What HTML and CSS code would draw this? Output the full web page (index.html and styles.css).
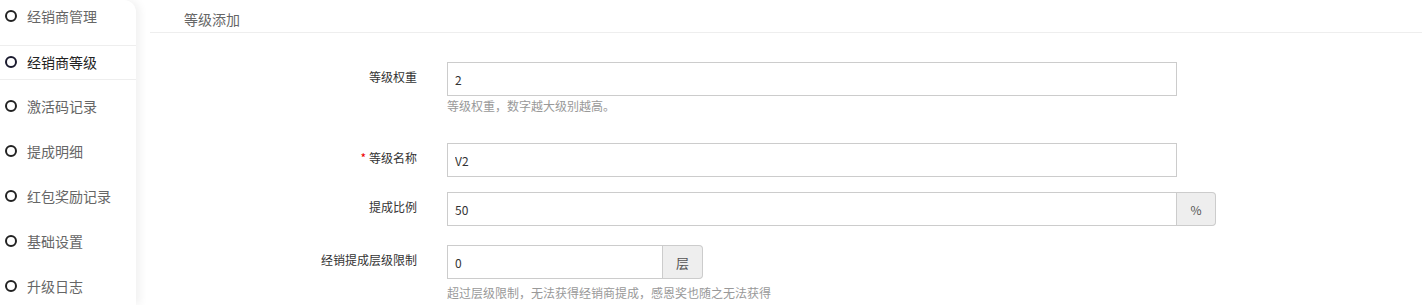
FILE: index.html
```html
<!DOCTYPE html>
<html lang="zh">
<head>
<meta charset="utf-8">
<link rel="stylesheet" href="styles.css">
</head>
<body>
<div class="page">
  <aside class="sidebar">
    <ul class="menu">
      <li class="menu-item"><span class="dot"></span>经销商管理</li>
      <li class="menu-item active"><span class="dot"></span>经销商等级</li>
      <li class="menu-item"><span class="dot"></span>激活码记录</li>
      <li class="menu-item"><span class="dot"></span>提成明细</li>
      <li class="menu-item"><span class="dot"></span>红包奖励记录</li>
      <li class="menu-item"><span class="dot"></span>基础设置</li>
      <li class="menu-item"><span class="dot"></span>升级日志</li>
    </ul>
  </aside>
  <main class="content">
    <div class="panel-head">等级添加</div>
    <form class="form">
      <div class="row row-1">
        <label class="label">等级权重</label>
        <div class="control">
          <input class="input" type="text" value="2">
          <div class="help help-1">等级权重，数字越大级别越高。</div>
        </div>
      </div>
      <div class="row row-2">
        <label class="label"><span class="req">*</span>等级名称</label>
        <div class="control">
          <input class="input" type="text" value="V2">
        </div>
      </div>
      <div class="row row-3">
        <label class="label">提成比例</label>
        <div class="control">
          <div class="group group-wide">
            <input class="input grp-input" type="text" value="50">
            <span class="addon">%</span>
          </div>
        </div>
      </div>
      <div class="row row-4">
        <label class="label">经销提成层级限制</label>
        <div class="control">
          <div class="group group-narrow">
            <input class="input grp-input" type="text" value="0">
            <span class="addon addon-layer">层</span>
          </div>
          <div class="help help-4">超过层级限制，无法获得经销商提成，感恩奖也随之无法获得</div>
        </div>
      </div>
    </form>
  </main>
</div>
</body>
</html>
```

FILE: styles.css
```css
* { box-sizing: border-box; }
html, body {
  margin: 0;
  padding: 0;
  background: #fff;
  font-family: "Noto Sans CJK SC", "Noto Sans", "Liberation Sans", sans-serif;
  color: #333;
}
.page {
  display: flex;
  height: 305px;
  overflow: hidden;
}
.sidebar {
  width: 136px;
  flex: 0 0 136px;
  background: #fff;
  border-top-right-radius: 12px;
  box-shadow: 4px 0 8px rgba(0, 0, 0, 0.06);
  position: relative;
  z-index: 1;
}
.menu {
  list-style: none;
  margin: 0;
  padding: 0;
}
.menu-item {
  display: flex;
  align-items: center;
  height: 45px;
  padding-left: 5px;
  padding-bottom: 12px;
  font-size: 14px;
  color: #666;
  white-space: nowrap;
}
.menu-item:first-child {
  height: 45px;
  padding-bottom: 13px;
}
.menu-item.active {
  height: 35px;
  padding-bottom: 1px;
  color: #222;
  border-top: 1px solid #eee;
  border-bottom: 1px solid #eee;
  margin-bottom: 9px;
}
.dot {
  width: 12px;
  height: 12px;
  border: 2px solid #222;
  border-radius: 50%;
  margin-right: 10px;
  flex: 0 0 12px;
}
.menu-item.active .dot {
  border-color: #1a1a2e;
}
.content {
  flex: 1;
  margin-left: 14px;
}
.panel-head {
  height: 33px;
  padding-left: 34px;
  padding-top: 9px;
  font-size: 14px;
  color: #666;
  border-bottom: 1px solid #eee;
}
.form {
  padding-top: 29px;
}
.row {
  display: grid;
  grid-template-columns: 267px 730px;
  column-gap: 30px;
}
.label {
  text-align: right;
  font-size: 12px;
  color: #333;
  padding-top: 6px;
  line-height: 17px;
}
.req {
  color: #e00;
  margin-right: 3px;
}
.input {
  display: block;
  width: 730px;
  height: 34px;
  border: 1px solid #ccc;
  border-radius: 0;
  padding: 0 7px;
  font-family: inherit;
  font-size: 12px;
  color: #333;
  background: #fff;
  outline: none;
}
.help {
  font-size: 12px;
  color: #999;
  line-height: 17px;
}
.help-1 { margin-top: 1px; }
.help-4 { margin-top: 5px; }
.row-2 { margin-top: 29px; }
.row-3 { margin-top: 15px; }
.row-4 { margin-top: 19px; }
.group {
  display: flex;
}
.group-wide { width: 769px; }
.group-narrow { width: 256px; }
.grp-input {
  flex: 1;
  width: auto;
  min-width: 0;
}
.addon {
  flex: 0 0 39px;
  height: 34px;
  display: flex;
  align-items: center;
  justify-content: center;
  background: #eee;
  border: 1px solid #ccc;
  border-left: 0;
  border-radius: 0 4px 4px 0;
  font-size: 12px;
  color: #555;
}
.addon-layer {
  flex: 0 0 40px;
  font-size: 13px;
}
```
